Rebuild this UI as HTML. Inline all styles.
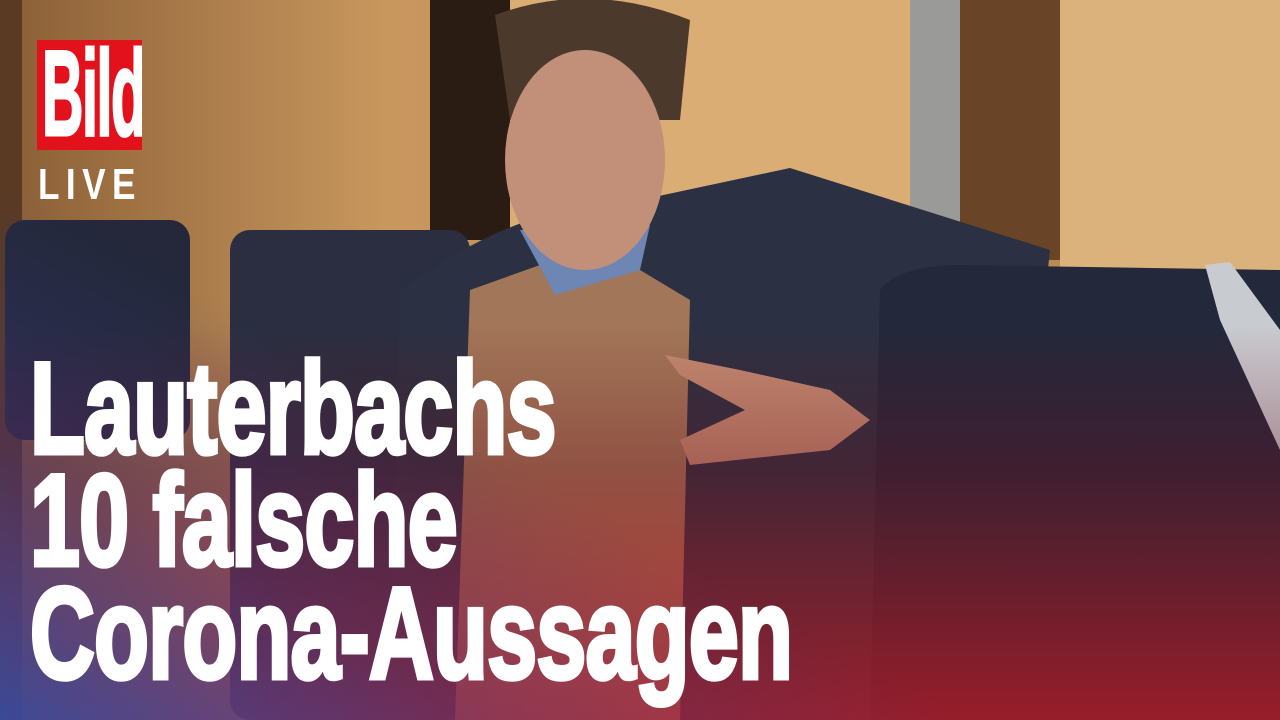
<!DOCTYPE html>
<html><head><meta charset="utf-8"><style>
html,body{margin:0;padding:0}
body{width:1280px;height:720px;overflow:hidden;position:relative;background:#c99a62;font-family:"Liberation Sans",sans-serif}
svg.bg{position:absolute;left:0;top:0}
.ov{position:absolute;left:0;top:0;width:1280px;height:720px;
background:
linear-gradient(to top right, rgba(40,80,170,.85) 0%, rgba(60,60,140,.35) 20%, rgba(0,0,0,0) 38%),
linear-gradient(to bottom, rgba(0,0,0,0) 0%, rgba(0,0,0,0) 45%, rgba(110,15,30,.35) 65%, rgba(200,25,35,.7) 100%);}
.l{position:absolute;left:30px;color:#fff;font-weight:bold;font-size:130px;line-height:130px;white-space:nowrap;transform-origin:0 0;letter-spacing:-1px;-webkit-text-stroke:5px #fff}
.logo{position:absolute;left:37px;top:40px;width:105px;height:110px;background:#e2111b;overflow:hidden}
.logo span{position:absolute;left:5px;top:-12px;color:#fff;font-weight:bold;font-size:122px;line-height:130px;transform:scaleX(.47);transform-origin:0 0;letter-spacing:-3px;-webkit-text-stroke:3px #fff}
.live{position:absolute;left:38px;top:160px;color:#fff;font-weight:bold;font-size:44px;line-height:50px;letter-spacing:8px;transform:scaleX(.8);transform-origin:0 0}
</style></head><body>
<svg class="bg" width="1280" height="720" viewBox="0 0 1280 720">
<defs>
<linearGradient id="w" x1="0" x2="1"><stop offset="0" stop-color="#8a5e36"/><stop offset=".3" stop-color="#c8975e"/><stop offset="1" stop-color="#b88450"/></linearGradient>
</defs>
<rect width="1280" height="720" fill="url(#w)"/>
<rect x="0" y="0" width="22" height="720" fill="#5a3a22"/>
<rect x="430" y="0" width="80" height="240" fill="#2a1c12"/>
<rect x="510" y="0" width="400" height="240" fill="#d9ad74"/>
<rect x="910" y="0" width="50" height="230" fill="#9a9a98"/>
<rect x="960" y="0" width="100" height="260" fill="#6a4426"/>
<rect x="1060" y="0" width="220" height="280" fill="#dcb27c"/>
<rect x="5" y="220" width="185" height="220" rx="20" fill="#24283a"/>
<rect x="230" y="230" width="240" height="490" rx="20" fill="#2a2e40"/>
<path d="M390 720 L400 290 Q470 240 530 220 L640 200 L790 168 L1050 250 L1000 720 Z" fill="#2b3142"/>
<path d="M455 720 L470 290 L540 265 L640 270 L690 300 L680 720 Z" fill="#a27658"/>
<path d="M520 230 L555 295 L640 270 L650 225 Z" fill="#6e86b4"/>
<path d="M495 15 Q590 -20 690 20 L680 120 L510 120 Z" fill="#4b3a2c"/>
<ellipse cx="585" cy="160" rx="80" ry="110" fill="#c29078"/>
<path d="M665 355 L740 370 L830 390 L870 420 L830 450 L690 465 L680 440 L745 410 L680 375 Z" fill="#c48c72"/>
<path d="M880 290 Q900 265 960 265 L1280 270 L1280 720 L870 720 Z" fill="#23283a"/>
<path d="M1205 265 L1230 262 L1280 330 L1280 450 L1220 320 Z" fill="#c8ccd0"/>
</svg>
<div class="ov"></div>
<div class="logo"><span>Bild</span></div>
<div class="live">LIVE</div>
<div class="l" style="top:343px;transform:scaleX(.69)">Lauterbachs</div>
<div class="l" style="top:455px;transform:scaleX(.69)">10 falsche</div>
<div class="l" style="top:568px;transform:scaleX(.69)">Corona-Aussagen</div>
</body></html>
